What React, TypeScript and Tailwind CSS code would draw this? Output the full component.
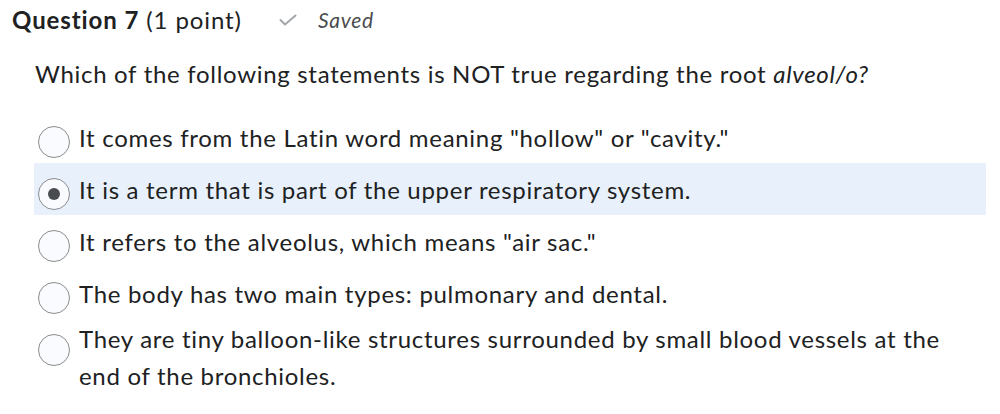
const options = [
  'It comes from the Latin word meaning "hollow" or "cavity."',
  "It is a term that is part of the upper respiratory system.",
  'It refers to the alveolus, which means "air sac."',
  "The body has two main types: pulmonary and dental.",
  "They are tiny balloon-like structures surrounded by small blood vessels at the end of the bronchioles.",
];

const selected = 1;

function Radio({ checked }: { checked: boolean }) {
  return (
    <span className="mt-[15px] flex h-[32px] w-[32px] shrink-0 items-center justify-center rounded-full border border-[#8a8c8e] bg-[#f9fbff]">
      {checked && <span className="h-[12px] w-[12px] rounded-full bg-[#494c4e]" />}
    </span>
  );
}

export default function App() {
  return (
    <div className="h-[414px] w-[1000px] bg-white font-['Lato',sans-serif] text-[#202122]">
      <div className="flex items-center pl-[12px] pt-[4px]">
        <h2 className="text-[24px] leading-[32px] tracking-[0.9px]">
          <span className="font-bold">Question 7</span> (1 point)
        </h2>
        <svg className="ml-[37px] h-[12px] w-[18px]" viewBox="0 0 18 12" fill="none">
          <path d="M1.5 6l4.5 4.5L16.5 1.5" stroke="#a4a8ab" strokeWidth="2" strokeLinecap="round" strokeLinejoin="round" />
        </svg>
        <span className="ml-[21px] text-[21px] italic tracking-[0.7px] text-[#494c4e]">Saved</span>
      </div>

      <p className="ml-[35px] mt-[23px] text-[24px] leading-[30px] tracking-[0.7px]">
        Which of the following statements is NOT true regarding the root <i>alveol/o?</i>
      </p>

      <div className="ml-[34px] mt-[22px] w-[952px]">
        {options.map((text, i) => (
          <label
            key={i}
            className={`flex gap-[9px] pl-[4px] pr-[20px] ${i === selected ? "bg-[#e8f1fb]" : ""}`}
          >
            <Radio checked={i === selected} />
            <span
              className={`text-[24px] leading-[37px] tracking-[0.7px] ${
                i === options.length - 1 ? "pt-[1px]" : "pt-[8px] pb-[7px]"
              }`}
            >
              {text}
            </span>
          </label>
        ))}
      </div>
    </div>
  );
}
